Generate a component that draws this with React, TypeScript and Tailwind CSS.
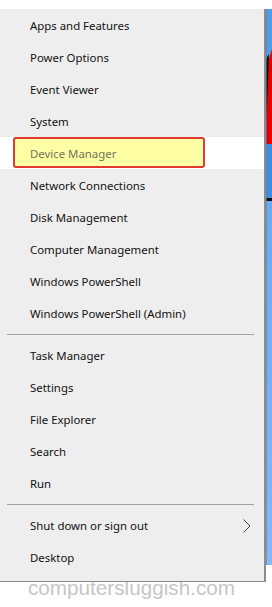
import React from "react";

const group1 = [
  "Apps and Features",
  "Power Options",
  "Event Viewer",
  "System",
  "Device Manager",
  "Network Connections",
  "Disk Management",
  "Computer Management",
  "Windows PowerShell",
  "Windows PowerShell (Admin)",
];
const group2 = ["Task Manager", "Settings", "File Explorer", "Search", "Run"];

function Row({ label }: { label: string }) {
  if (label === "Device Manager") {
    return (
      <div className="relative h-[32px] bg-white flex items-center pt-px">
        <div className="absolute left-[13px] top-0 w-[192px] h-[31px] rounded-[3px] border-2 border-[#e23a2e] bg-[#ffffa6]" />
        <span className="relative pl-[30px] text-[#737358]">{label}</span>
      </div>
    );
  }
  return (
    <div className="h-[32px] flex items-center pl-[30px] pt-px text-[#111]">
      <span>{label}</span>
    </div>
  );
}

function Sep() {
  return (
    <div className="h-[10px] flex items-center pl-[7px] pr-[10px]">
      <div className="h-px w-full bg-[#a3a3a3]" />
    </div>
  );
}

export default function App() {
  return (
    <div
      className="relative w-[272px] h-[607px] bg-white overflow-hidden"
      style={{ fontFamily: '"Noto Sans", "Open Sans", sans-serif' }}
    >
      <div
        className="absolute left-[28px] top-[578px] text-[20.7px] leading-none text-[#c6c6c6] z-0"
        style={{ fontFamily: '"Liberation Sans", Arial, sans-serif' }}
      >
        computersluggish.com
      </div>
      <div className="h-[9px]" />
      <div className="relative z-10 flex items-start">
        <div className="w-[266px] bg-[#eeeeee] border-r-2 border-b border-r-[#8c8c8c] border-b-[#8a8a8a] text-[11.4px] pb-[8px]">
          {group1.map((l) => (
            <Row key={l} label={l} />
          ))}
          <Sep />
          {group2.map((l) => (
            <Row key={l} label={l} />
          ))}
          <Sep />
          <div className="h-[32px] flex items-center justify-between pl-[30px] pr-[13px] pt-px text-[#111]">
            <span>Shut down or sign out</span>
            <svg width="8" height="14" viewBox="0 0 8 14">
              <polyline points="0.5,0.5 7,7 0.5,13.5" fill="none" stroke="#444" strokeWidth="1" />
            </svg>
          </div>
          <Row label="Desktop" />
        </div>
        <svg width="6" height="556" viewBox="0 0 6 556" className="block">
          <defs>
            <linearGradient id="lb" x1="0" y1="0" x2="0" y2="1">
              <stop offset="0" stopColor="#6aaaf0" />
              <stop offset="1" stopColor="#86b8f4" />
            </linearGradient>
          </defs>
          <rect x="0" y="0" width="6" height="556" fill="#4f9ce9" />
          <polygon points="0,60 6,40 6,135 0,135" fill="#e80000" />
          <polygon points="0,50 3,45 1,100 0,110" fill="#111" />
          <rect x="0" y="135" width="6" height="54" fill="#3f8fe0" />
          <rect x="0" y="189" width="6" height="3" fill="#111" />
          <rect x="0" y="192" width="6" height="364" fill="url(#lb)" />
          <rect x="0" y="0" width="1" height="556" fill="#5d7fa6" opacity="0.6" />
        </svg>
      </div>
    </div>
  );
}
